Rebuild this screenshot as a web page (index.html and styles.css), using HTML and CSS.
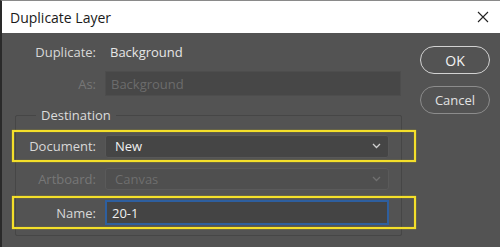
FILE: index.html
```html
<!DOCTYPE html>
<html>
<head>
<meta charset="utf-8">
<link rel="stylesheet" href="styles.css">
</head>
<body>
<div class="window">
  <div class="titlebar">
    <span class="title">Duplicate Layer</span>
    <svg class="close" width="12" height="12" viewBox="0 0 12 12"><path d="M1 1 L11 11 M11 1 L1 11" stroke="#222" stroke-width="1.1" fill="none"/></svg>
  </div>
  <div class="content">
    <div class="main">
      <div class="row row-dup">
        <span class="label">Duplicate:</span>
        <span class="value">Background</span>
      </div>
      <div class="row row-as">
        <span class="label disabled">As:</span>
        <div class="input input-as disabled">Background</div>
      </div>
      <fieldset class="dest">
        <legend>Destination</legend>
        <div class="frow frow-doc">
          <span class="label flabel">Document:</span>
          <div class="select">
            <span>New</span>
            <svg class="chev" width="9" height="6" viewBox="0 0 9 6"><path d="M1 1 L4.5 4.5 L8 1" stroke="#d0d0d0" stroke-width="1.3" fill="none"/></svg>
          </div>
          <span class="hl"></span>
        </div>
        <div class="frow frow-art">
          <span class="label flabel disabled">Artboard:</span>
          <div class="select select-dis">
            <span>Canvas</span>
            <svg class="chev" width="9" height="6" viewBox="0 0 9 6"><path d="M1 1 L4.5 4.5 L8 1" stroke="#707070" stroke-width="1.3" fill="none"/></svg>
          </div>
        </div>
        <div class="frow frow-name">
          <span class="label flabel">Name:</span>
          <div class="input input-name">20-1</div>
          <span class="hl"></span>
        </div>
      </fieldset>
    </div>
    <div class="buttons">
      <div class="btn btn-ok">OK</div>
      <div class="btn btn-cancel">Cancel</div>
    </div>
  </div>
</div>
</body>
</html>
```

FILE: styles.css
```css
* { box-sizing: border-box; }
html, body { margin: 0; padding: 0; }
body {
  width: 500px;
  height: 247px;
  overflow: hidden;
  background: #535353;
  font-family: "Open Sans", "Noto Sans", sans-serif;
}
.window {
  width: 500px;
  height: 247px;
  border-top: 1px solid #8a8a8a;
  border-left: 2px solid #2a2a2a;
  background: #535353;
}
.titlebar {
  height: 32px;
  background: #ffffff;
  display: flex;
  align-items: center;
  justify-content: space-between;
  padding: 0 11px 0 8px;
}
.title {
  font-size: 14px;
  color: #1a1a1a;
}
.close { display: block; }
.content {
  display: flex;
}
.main {
  width: 400px;
  padding: 9px 0 0 13px;
}
.row {
  display: flex;
  align-items: center;
}
.label {
  width: 81px;
  text-align: right;
  font-size: 13px;
  color: #d8d8d8;
  flex: none;
}
.label.disabled { color: #777777; }
.value {
  margin-left: 14px;
  font-size: 13px;
  color: #e6e6e6;
}
.row-dup { height: 20px; }
.row-as { margin-top: 9px; }
.input {
  margin-left: 9px;
  height: 25px;
  display: flex;
  align-items: center;
  font-size: 13px;
  background: #474747;
  border: 1px solid #4d4d4d;
  padding-left: 5px;
}
.input-as {
  width: 296px;
  color: #6c6c6c;
}
.dest {
  margin: 11px 0 0 0;
  padding: 6px 12px 6px 0;
  border: 1px solid #464646;
  border-radius: 2px;
  width: 387px;
}
.dest legend {
  margin-left: 20px;
  padding: 0 5px;
  font-size: 13px;
  color: #dcdcdc;
  line-height: 17px;
}
.frow {
  position: relative;
  display: flex;
  align-items: center;
}
.flabel { width: 80px; }
.frow-doc { height: 32px; }
.frow-art { height: 34px; }
.frow-name { height: 33px; }
.select {
  margin-left: 9px;
  width: 284px;
  height: 23px;
  display: flex;
  align-items: center;
  justify-content: space-between;
  padding: 0 7px 0 9px;
  font-size: 13px;
  color: #f0f0f0;
  background: #454545;
  border: 1px solid #575757;
  border-radius: 3px;
}
.select-dis {
  height: 22px;
  color: #6e6e6e;
  background: #4f4f4f;
  border-color: #5a5a5a;
}
.chev { display: block; }
.input-name {
  width: 284px;
  color: #f0f0f0;
  background: #444444;
  border: 2px solid #2e5f9f;
  padding-left: 5px;
}
.hl {
  position: absolute;
  left: -4px;
  right: -27px;
  top: 0;
  bottom: 0;
  border: 2px solid #f4df2a;
  box-shadow: 0 0 1px #c9b510, inset 0 0 1px #c9b510;
  pointer-events: none;
}
.buttons {
  margin-left: 18px;
  padding-top: 13px;
  display: flex;
  flex-direction: column;
  gap: 12px;
}
.btn {
  width: 70px;
  height: 28px;
  border-radius: 14px;
  display: flex;
  align-items: center;
  justify-content: center;
  font-size: 13px;
}
.btn-ok {
  border: 1px solid #d2d2d2;
  color: #f4f4f4;
  font-size: 14px;
}
.btn-cancel {
  border: 1px solid #8c8c8c;
  color: #e2e2e2;
}
```
